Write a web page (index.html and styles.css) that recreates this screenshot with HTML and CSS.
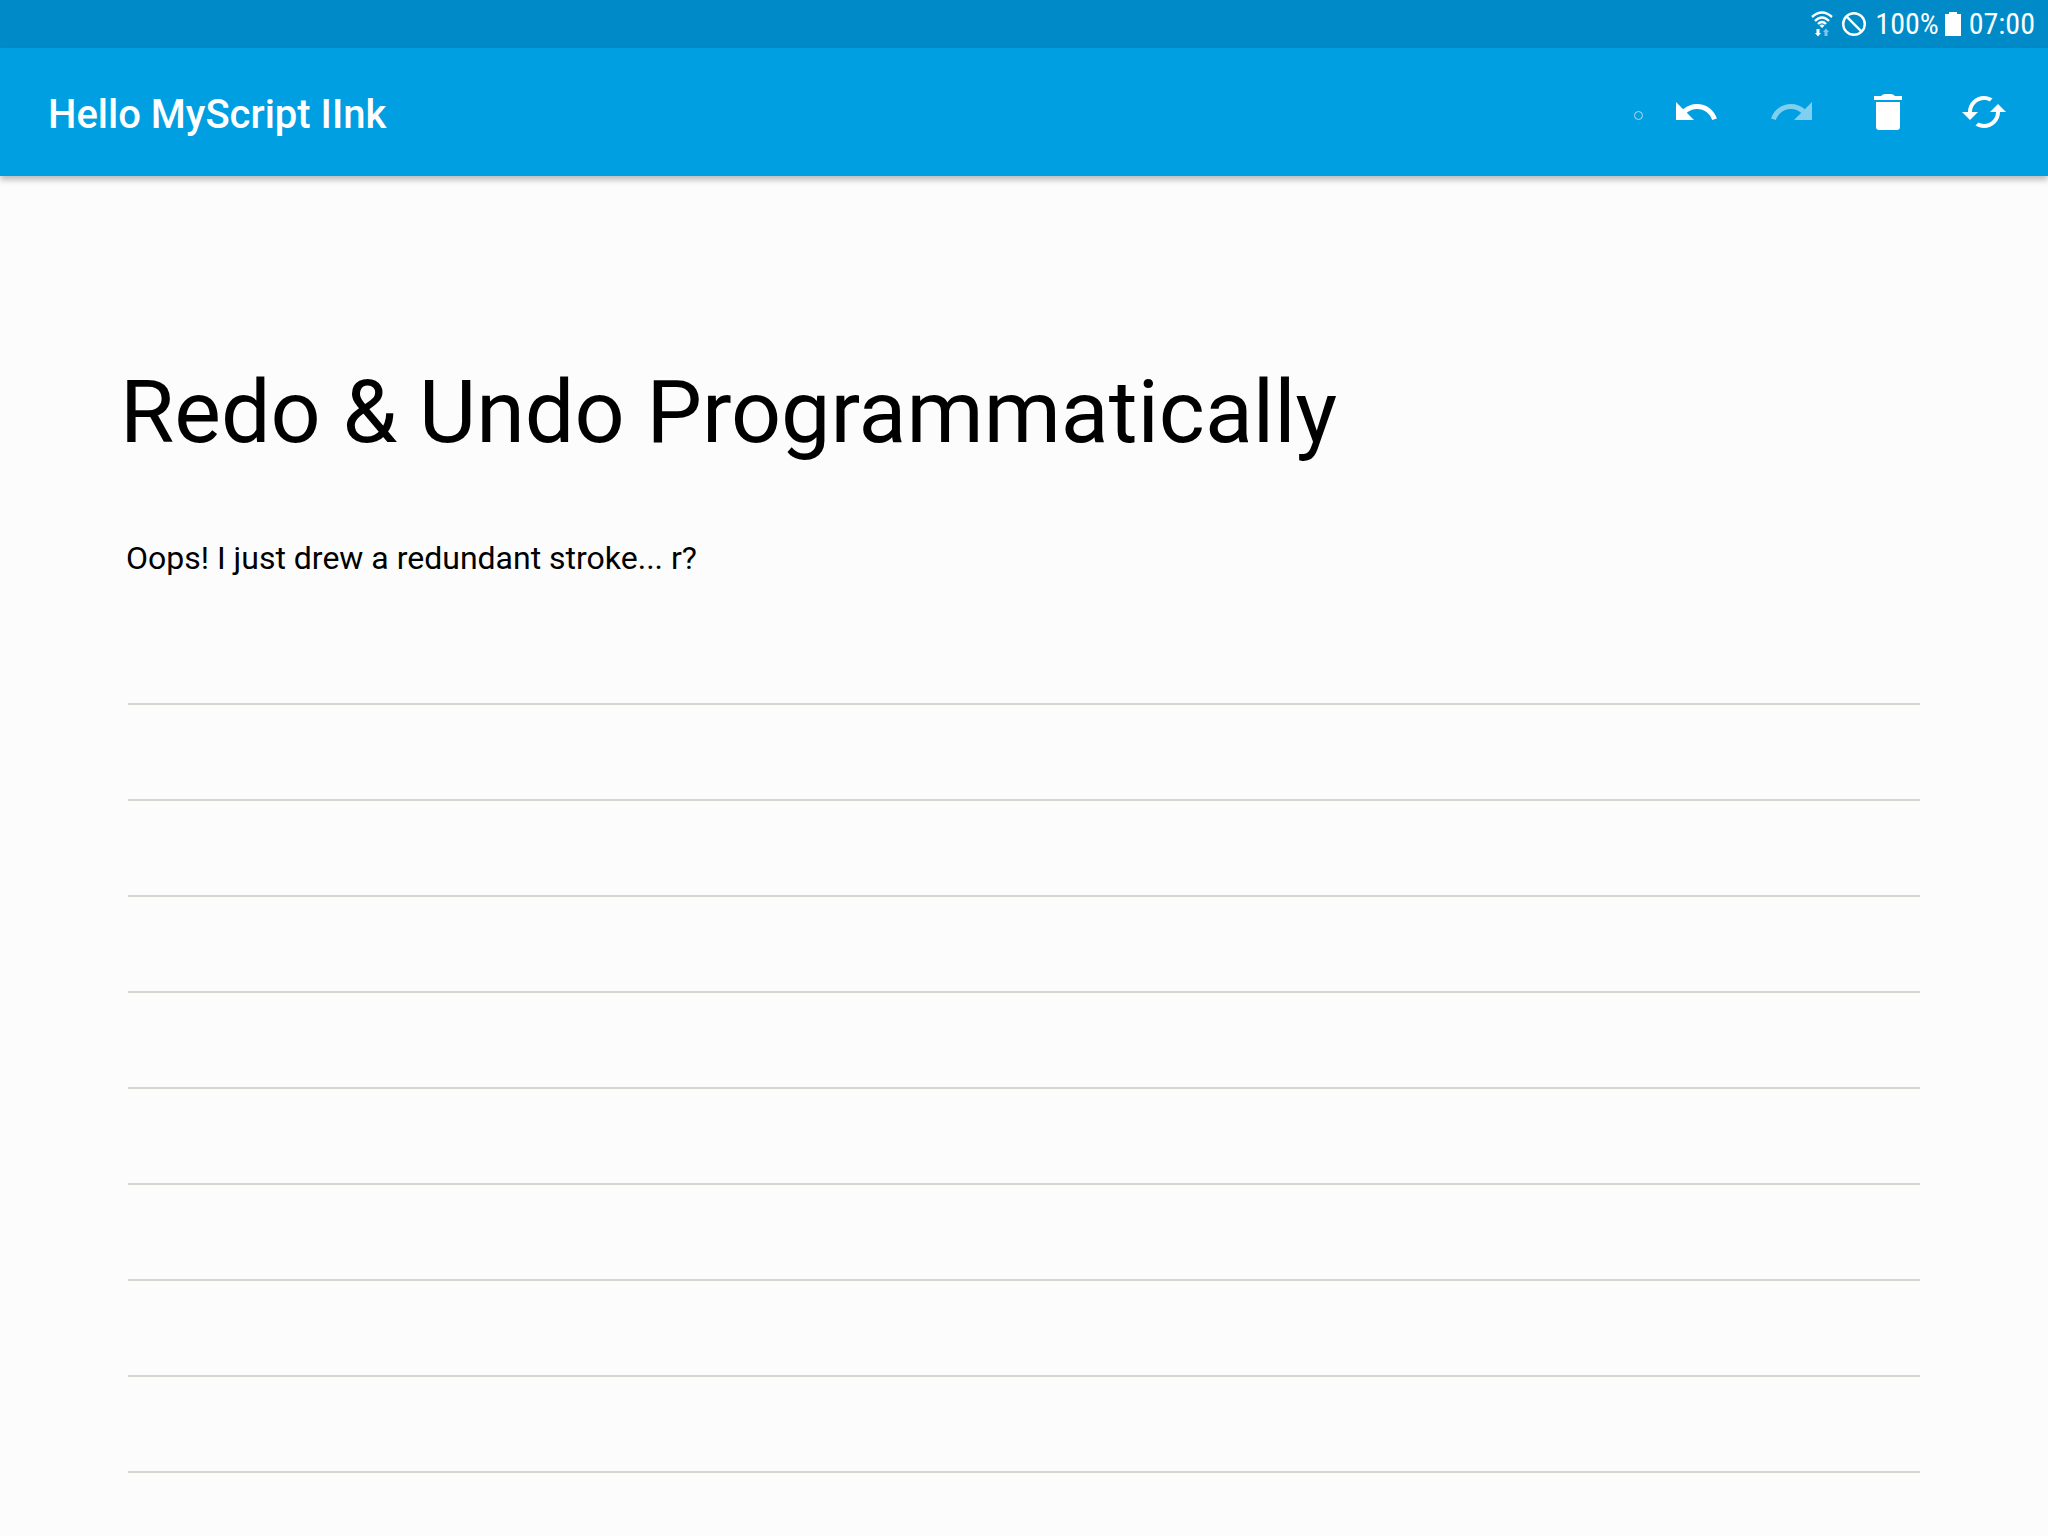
FILE: index.html
```html
<!DOCTYPE html>
<html lang="en">
<head>
<meta charset="utf-8">
<meta name="viewport" content="width=device-width, initial-scale=1">
<title>Hello MyScript IInk</title>
<link rel="stylesheet" href="styles.css">
</head>
<body>
<div class="status-bar">
  <svg class="status-wifi" viewBox="0 0 22 26" aria-hidden="true">
    <g fill="none" stroke="#fff" stroke-width="2.400">
      <path d="M1 6Q11 -3 21 6"/>
      <path d="M4 10Q11 3 18 10"/>
      <path d="M7 13Q11 9 15 13"/>
    </g>
    <path fill="#fff" d="M8.500 14.500Q11 12.500 13.500 14.500L11 17zM5.500 18h3v4H10l-3 3.500L4 22h1.500z"/>
    <path fill="#fff" opacity=".5" d="M13.500 25h3v-4H18l-3-3.500L12 21h1.500z"/>
  </svg>
  <svg class="status-blocked" viewBox="0 0 26 26" aria-hidden="true">
    <g fill="none" stroke="#fff" stroke-width="2.400">
      <circle cx="13" cy="13" r="10.800"/>
      <path d="M5.400 5.400l15.200 15.200"/>
    </g>
  </svg>
  <span class="status-level">100%</span>
  <svg class="status-battery" viewBox="0 0 16 24" aria-hidden="true">
    <path fill="#fff" d="M4 0h8v2h4v22H0V2h4z"/>
  </svg>
  <time class="status-time">07:00</time>
</div>
<header class="toolbar">
  <h1 class="toolbar-title">Hello MyScript IInk</h1>
  <span class="pointer"></span>
  <button class="tool" type="button" aria-label="Undo">
    <svg viewBox="0 0 24 24"><path d="M12.500 8c-2.650 0-5.050.99-6.900 2.600L2 7v9h9l-3.620-3.620c1.390-1.160 3.160-1.880 5.120-1.880 3.540 0 6.550 2.310 7.600 5.500l2.370-.78C21.080 11.030 17.150 8 12.500 8z"/></svg>
  </button>
  <button class="tool" type="button" aria-label="Redo" disabled>
    <svg viewBox="0 0 24 24"><path d="M18.400 10.600C16.550 8.990 14.150 8 11.500 8c-4.650 0-8.580 3.030-9.960 7.220L3.900 16c1.050-3.190 4.050-5.500 7.600-5.500 1.950 0 3.730.72 5.120 1.880L13 16h9V7l-3.600 3.600z"/></svg>
  </button>
  <button class="tool" type="button" aria-label="Clear">
    <svg viewBox="0 0 24 24"><path d="M6 19.500c0 1 .6 1.500 1.500 1.500h9c.9 0 1.500-.5 1.500-1.500V7H6v12.500zM19 4h-3.500q-1-1-2-1h-3q-1 0-2 1H5v2h14V4z"/></svg>
  </button>
  <button class="tool" type="button" aria-label="Convert">
    <svg viewBox="0 0 24 24"><path d="M19 8l-4 4h3c0 3.310-2.690 6-6 6-1.010 0-1.970-.25-2.800-.7l-1.460 1.460C8.970 19.540 10.430 20 12 20c4.420 0 8-3.580 8-8h3l-4-4zM6 12c0-3.310 2.690-6 6-6 1.010 0 1.970.25 2.800.7l1.460-1.460C15.030 4.460 13.570 4 12 4c-4.420 0-8 3.580-8 8H1l4 4 4-4H6z"/></svg>
  </button>
</header>
<main class="page">
  <h2 class="note-title">Redo &amp; Undo Programmatically</h2>
  <p class="note-text">Oops! I just drew a redundant stroke... r?</p>
  <div class="ruled"></div>
</main>
</body>
</html>
```
FILE: styles.css
```css
* {
  box-sizing: border-box;
}

body {
  margin: 0;
  min-height: 100vh;
  display: flex;
  flex-direction: column;
  background: #fcfcfc;
  color: #000;
  font-family: Roboto, "Liberation Sans", sans-serif;
}

.status-bar {
  height: 48px;
  padding: 0 13px;
  display: flex;
  align-items: center;
  justify-content: flex-end;
  background: #008bc8;
  color: #fff;
  font-family: "Roboto Condensed", Roboto, sans-serif;
  font-size: 30px;
  line-height: 50px;
}

.status-wifi {
  width: 22px;
  height: 26px;
}

.status-blocked {
  width: 26px;
  height: 26px;
  margin: 0 8px;
}

.status-battery {
  width: 16px;
  height: 24px;
  margin: 0 8px 0 6px;
}

.toolbar {
  height: 128px;
  padding: 0 16px 0 48px;
  display: flex;
  align-items: center;
  background: #009fe2;
  color: #fff;
  box-shadow: 0 4px 6px rgba(0, 0, 0, 0.25);
}

.toolbar-title {
  flex: 1;
  margin: 0;
  padding-top: 6px;
  font-size: 40px;
  font-weight: 500;
  line-height: 48px;
}

.pointer {
  width: 9px;
  height: 9px;
  margin: 6px 5px 0 0;
  border: 1px solid #b4dcec;
  border-radius: 50%;
}

.tool {
  width: 96px;
  height: 96px;
  padding: 24px;
  border: 0;
  background: none;
}

.tool svg {
  display: block;
  width: 48px;
  height: 48px;
  fill: #fff;
}

.tool:disabled svg {
  opacity: 0.5;
}

.page {
  flex: 1;
  display: flex;
  flex-direction: column;
  padding: 184px 128px 0;
}

.note-title {
  margin: 0 0 0 -8px;
  font-size: 88px;
  font-weight: 400;
  line-height: 104px;
}

.note-text {
  margin: 74px 0 125px -2px;
  font-size: 32px;
  line-height: 40px;
}

.ruled {
  flex: 1;
  min-height: 832px;
  background: repeating-linear-gradient(#d6d6d0 0 2px, transparent 2px 96px);
}
```
